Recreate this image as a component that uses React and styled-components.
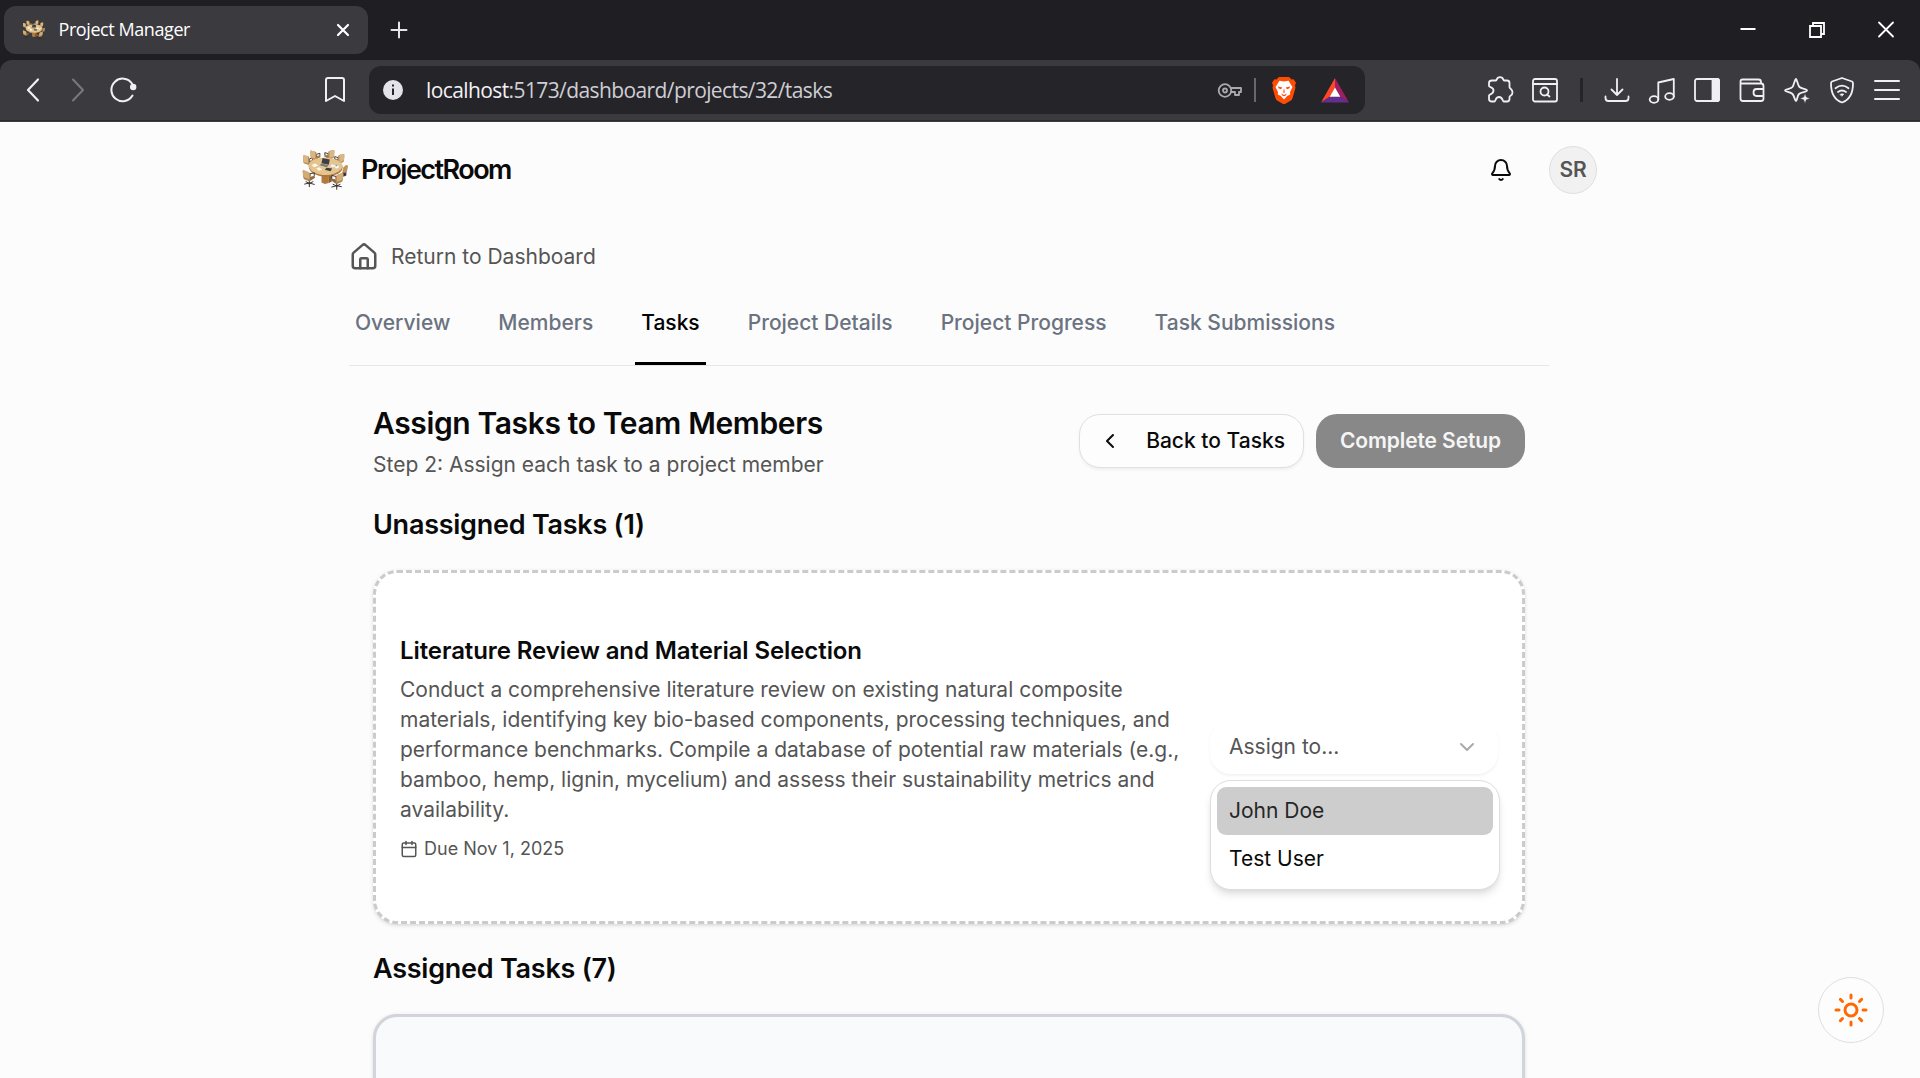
import React from "react";
import styled, { createGlobalStyle } from "styled-components";
import { Bell, Calendar, ChevronDown, ChevronLeft, Sun } from "lucide-react";

const GlobalStyle = createGlobalStyle`
  * { box-sizing: border-box; }
  body { margin: 0; background: #fcfcfc; overflow: hidden; }
  h1, h2, h3, p { margin: 0; }
  button { font: inherit; }
`;

const Screen = styled.div`
  width: 1920px;
  height: 1078px;
  overflow: hidden;
  background: #fcfcfc;
  font-family: Inter, "Liberation Sans", sans-serif;
  font-size: 21px;
  color: #0a0a0a;
`;

/* ---------- browser frame ---------- */

const Browser = styled.div`
  background: #1f1e23;
  font-family: "Open Sans", "Noto Sans", sans-serif;
`;

const TabStrip = styled.div`
  height: 60px;
  display: flex;
  align-items: center;
  padding-left: 4px;
`;

const BrowserTab = styled.div`
  width: 364px;
  height: 48px;
  border-radius: 12px;
  background: #3b3a3f;
  display: flex;
  align-items: center;
  padding: 0 17px 0 18px;
  color: #fff;
`;

const TabTitle = styled.span`
  flex: 1;
  margin-left: 12.5px;
  padding-bottom: 2px;
  font-size: 18px;
  line-height: 24px;
  letter-spacing: -0.42px;
`;

const NewTab = styled.div`
  display: flex;
  margin-left: 16px;
  flex: 1;
`;

const WindowControls = styled.div`
  display: flex;
  gap: 39px;
  padding-right: 19.5px;
`;

const Toolbar = styled.div`
  height: 62px;
  padding: 0 18px 2px;
  border-radius: 12px 12px 0 0;
  background: linear-gradient(#3b3a3f 60px, #2c2b30 60px, #2c2b30 61px, #3b3a3f 61px);
  display: flex;
  align-items: center;
`;

const IconRow = styled.div`
  display: flex;
  align-items: center;
  gap: 15px;
  margin-right: ${(p) => p.$after || 0}px;
  margin-left: ${(p) => (p.$end ? "auto" : 0)};
`;

const AddressBar = styled.div`
  width: 996px;
  height: 48px;
  border-radius: 12px;
  background: #252429;
  display: flex;
  align-items: center;
  padding: 0 16px 0 9px;
`;

const Url = styled.span`
  flex: 1;
  margin-left: 18px;
  font-size: 21px;
  line-height: 30px;
  letter-spacing: -0.6px;
  color: #cfced4;
  b { font-weight: 400; color: #f2f1f6; }
`;

const Divider = styled.span`
  width: ${(p) => p.$w}px;
  height: 24px;
  background: ${(p) => p.$color};
  margin: 0 ${(p) => p.$after}px 0 ${(p) => p.$before}px;
`;

const Shields = styled.div`
  display: flex;
  align-items: center;
  gap: 25px;
`;

const Glyph = styled.svg`
  display: block;
  flex: none;
  fill: none;
  stroke: ${(p) => p.$color || "#f0f0f4"};
  stroke-width: ${(p) => p.$stroke || 1.8};
  stroke-linecap: round;
  stroke-linejoin: round;
`;

function BarIcon({ children, size = 30, ...rest }) {
  return (
    <Glyph width={size} height={size} viewBox="0 0 30 30" {...rest}>
      {children}
    </Glyph>
  );
}

/* Back row chairs show their upright backs and a dark armrest. */
function BackChair({ x, y, flip = 1 }) {
  return (
    <g transform={`translate(${x} ${y}) scale(${flip} 1)`}>
      <path d="M14 20 28 15 32 20 18 28Z" fill="#a37b4a" />
      <path d="M19 19V12L29 9V15" stroke="#3a3530" strokeWidth="2.8" />
      <path d="M0 4Q0 0 4 1L15 4Q19 5 19 9V27Q19 31 15 30L4 26Q1 25 1 21Z" fill="#b88d57" />
      <path d="M0 4Q0 0 4 1L12 3Q15 4 15 8V25L4 22Q1 21 1 18Z" fill="#d9b683" />
    </g>
  );
}

/* Front row chairs are seen from behind, with a column and star base. */
function FrontChair({ x, y, flip = 1 }) {
  return (
    <g transform={`translate(${x} ${y}) scale(${flip} 1)`}>
      <path d="M20 30V42M6 42 20 39 35 43M10 35 20 40 31 35M20 41V50" stroke="#35302d" strokeWidth="3" />
      <path d="M16 22 35 17 38 22 24 32 13 29Z" fill="#8e6b42" />
      <path d="M22 18V11L35 8V16" stroke="#3a3530" strokeWidth="3" />
      <path d="M0 4Q0-1 5 1L19 7Q23 9 23 14V30Q23 34 18 33L6 28Q3 27 2 23Z" fill="#ad824f" />
      <path d="M0 4Q0-1 5 1L16 5Q20 7 20 12V28L7 23Q3 21 2 18Z" fill="#d3ac75" />
    </g>
  );
}

function RoomLogo({ width, height }) {
  return (
    <Glyph width={width} height={height} viewBox="18 18 142 124" $color="none">
      <BackChair x={21} y={36} />
      <BackChair x={43} y={22} />
      <BackChair x={116} y={20} flip={-1} />
      <BackChair x={146} y={32} flip={-1} />
      <path d="M150 67Q157 65 157 71L153 90Q151 95 145 95L139 92 143 74Z" fill="#bd925c" />
      <path d="M141 90h11v8l-9 4Z" fill="#3a3530" />
      <path d="M77 92h22v29l-12 3-10-5Z" fill="#b27a3e" />
      <path d="M99 92v29l9-5V94Z" fill="#8d5c2c" />
      <path d="M38 70Q40 55 64 49 89 43 114 50 139 57 141 74 140 89 117 97 95 105 69 99 39 91 38 70Z" fill="#a97840" />
      <path d="M38 67Q40 54 64 47 89 41 114 48 139 55 141 69 140 83 117 92 95 100 69 94 39 86 38 67Z" fill="#e6c48e" />
      <path d="M80 45 102 50 99 66 77 61Z" fill="#3c3f45" />
      <path d="m77 62 21 5-5 6-22-6Z" fill="#777b80" />
      <path d="m47 66 12-4 8 7-13 4Zm14 10 10-3 8 8-11 3Z" fill="#fbf8f1" />
      <path d="m108 64 12 3-7 7-10-4Zm8 7 11-4 4 6-10 5Z" fill="#eef6f8" />
      <path d="m92 75 17 2-5 8-17-4Z" fill="#3b3e43" />
      <circle cx="122" cy="68" r="2.500" fill="#49a6cb" />
      <FrontChair x={20} y={82} />
      <FrontChair x={143} y={90} flip={-1} />
    </Glyph>
  );
}

function BraveLion() {
  return (
    <Glyph width="24" height="28" viewBox="0 0 24 28" $color="none">
      <path d="M7 1h10l2.6 2.4 2-.2L24 6.8l-1 2.6.5 2.4-3 10.4q-.5 1.6-2 2.6L12 28.500 5.500 24.800q-1.500-1-2-2.600L.5 11.800 1 9.400 0 6.800l2.400-3.600 2 .2Z" fill="#ff4c05" />
      <path d="m12 5.500 4.500-.8 4 6.300-2.500 5 .2 2.500-3 1.500L12 23.500l-3.200-3.500-3-1.500.2-2.500L3.500 11l4-6.300Z" fill="#fff" />
      <path d="m6 10.500 4.300 1-1.300 1.700L6.500 12.300Zm12 0-4.300 1 1.300 1.700 2.500-.9ZM12 12l.8 4.200-.8.800-.8-.8ZM9 17.500l3 1.500 3-1.500-1.500 2.200-1.500.5-1.500-.5Z" fill="#ff4c05" />
    </Glyph>
  );
}

function BatTriangle() {
  return (
    <Glyph width="28" height="25" viewBox="0 0 28 25" $color="none">
      <path d="M14 0 0 24.500 9 18.500 14 9.500Z" fill="#ff4724" />
      <path d="M14 0 28 24.500 19 18.500 14 9.500Z" fill="#9e1f63" />
      <path d="M0 24.500H28L19 18.500H9Z" fill="#662d91" />
      <path d="M14 9.500 19.300 18.800H8.700Z" fill="#fff" />
    </Glyph>
  );
}

function BrowserChrome() {
  return (
    <Browser>
      <TabStrip>
        <BrowserTab>
          <RoomLogo width={24} height={20} />
          <TabTitle>Project Manager</TabTitle>
          <Glyph width="16" height="16" viewBox="0 0 16 16" $color="#fff" $stroke={2.2}>
            <path d="m3 3 10 10M13 3 3 13" />
          </Glyph>
        </BrowserTab>
        <NewTab>
          <BarIcon $color="#e6e5ea" $stroke={2}>
            <path d="M15 7.500v15M7.500 15h15" />
          </BarIcon>
        </NewTab>
        <WindowControls>
          <BarIcon $color="#fff" $stroke={2}><path strokeLinecap="butt" d="M7.500 14h15" /></BarIcon>
          <BarIcon $color="#fff" $stroke={1.8}>
            <path strokeLinejoin="miter" d="M8 11h11v11H8ZM11 11V8h11v11h-3" />
          </BarIcon>
          <BarIcon $color="#fff" $stroke={1.8}><path d="m8 7.500 14 14M22 7.500l-14 14" /></BarIcon>
        </WindowControls>
      </TabStrip>

      <Toolbar>
        <IconRow $after={182}>
          <BarIcon $stroke={2.2}><path d="M20 4.500 10 15l10 10.500" /></BarIcon>
          <BarIcon $stroke={2} $color="#79787e"><path d="M10 4.500 20 15 10 25.500" /></BarIcon>
          <BarIcon $stroke={2}>
            <path d="M24.500 20.500A11.300 11.300 0 1 1 24 8.500" />
            <circle cx="25.200" cy="12" r="3.200" fill="#f0f0f4" stroke="none" />
          </BarIcon>
        </IconRow>
        <IconRow $after={19}>
          <BarIcon $stroke={2}>
            <path d="M8 3h14q2 0 2 2v21l-9-5-9 5V5q0-2 2-2Z" />
          </BarIcon>
        </IconRow>
        <AddressBar>
          <BarIcon $color="none">
            <circle cx="15" cy="15" r="10" fill="#e4e3e9" />
            <path d="M14 13.500h2V20h-2ZM14 9.500h2v2h-2Z" fill="#252429" />
          </BarIcon>
          <Url><b>localhost</b>:5173/dashboard/projects/32/tasks</Url>
          <BarIcon $color="#aaa9ae" $stroke={1.8}>
            <circle cx="10" cy="15.500" r="6.300" />
            <circle cx="10" cy="15.500" r="2" />
            <path d="M15.800 13H26v4h-2v3h-4v-3h-4.200" />
          </BarIcon>
          <Divider $w={2} $color="#68676c" $before={9} $after={16} />
          <Shields>
            <BraveLion />
            <BatTriangle />
          </Shields>
        </AddressBar>
        <IconRow $end>
          <BarIcon>
            <path d="M7 5.500H11C12 5.500 11.200 2.200 15 2.200S18 5.500 19 5.500h3Q24.500 5.500 24.500 8v4C24.500 14 27.500 13.500 27.500 17.500 27.500 21 24.500 20.500 24.500 22v2q0 2.500-2.500 2.500H18.500C17.500 26.500 18 22 14 22S11 26.500 9.500 26.500H7Q4 26.500 4 24V20.500C4 19 8.500 19.500 8.500 15.500S4 12.500 4 11V8Q4 5.500 7 5.500Z" />
          </BarIcon>
          <BarIcon>
            <rect x="3" y="4" width="24" height="22.500" rx="2" />
            <path d="M3 9h24" />
            <circle cx="14.500" cy="16.500" r="4" />
            <path d="m17 19.500 2.500 2" />
          </BarIcon>
          <Divider $w={3} $color="#252429" $before={4.5} $after={4.5} />
          <BarIcon>
            <path d="M15 4v16M9.500 14.500 15 20l5.500-5.500M3.500 21.500V23q0 3 3 3h17q3 0 3-3v-1.500" />
          </BarIcon>
          <BarIcon>
            <ellipse cx="7" cy="24.500" rx="4.300" ry="3.300" />
            <ellipse cx="22.500" cy="21.500" rx="4.300" ry="3.300" />
            <path d="M11.300 24.500V7.500L26.800 4v17.500" />
          </BarIcon>
          <BarIcon>
            <rect x="3" y="4" width="24" height="22" rx="2" />
            <path d="M20.500 4H25q2 0 2 2v18q0 2-2 2h-4.500Z" fill="#f0f0f4" />
          </BarIcon>
          <BarIcon>
            <path d="M24 8.500V7q0-2.500-2.500-2.500h-16Q3.500 4.500 3.500 6.500v17q0 2.500 2.500 2.500h18q2.500 0 2.500-2.500V11Q26.500 8.500 24 8.500H4M26.500 14H19.500q-3 0-3 3.500t3 3.500h7" />
          </BarIcon>
          <BarIcon>
            <path d="M14 4C15 4 15.500 10 17.500 12S25 14 25 15.500 19 17 17 19 15.200 26 14 26 12.500 21 10.500 19 3 16.800 3 15.500 9 14 10.500 12 12.900 4 14 4Z" />
            <path d="m23 18.300 1.400 3.700 3.800 1.400-3.800 1.400L23 28.500l-1.400-3.700-3.800-1.400 3.800-1.400Z" fill="#f0f0f4" stroke="#3b3a3f" strokeWidth="0.600" />
          </BarIcon>
          <BarIcon>
            <path d="M15 3 25 6.500q1 .5 1 2C26 18 23.500 24.500 15 27.500 6.500 24.500 4 18 4 8.500q0-1.500 1-2Z" />
            <path d="M8.500 13.200q6.500-5 13 0M11 17q4-3 8 0" />
            <path d="M13.300 19.300q1.700-1 3.400 0L15 21Z" fill="#f0f0f4" strokeWidth="0.800" />
          </BarIcon>
          <BarIcon $stroke={2}>
            <path d="M3 6h24M3 15h24M3 24h24" />
          </BarIcon>
        </IconRow>
      </Toolbar>
    </Browser>
  );
}

/* ---------- application ---------- */

const Page = styled.main`
  width: 1898px;
  height: 956px;
  overflow: hidden;
`;

const Header = styled.header`
  width: 1296px;
  height: 96px;
  margin: 0 auto;
  display: flex;
  align-items: center;
  padding: 0 0 1px 1px;
`;

const Brand = styled.span`
  flex: 1;
  margin-left: 12px;
  font-size: 27px;
  line-height: 42px;
  font-weight: 600;
  letter-spacing: -1.54px;
`;

const Avatar = styled.div`
  width: 48px;
  height: 48px;
  margin-left: 36px;
  border-radius: 50%;
  border: 1px solid #dfdfdf;
  background: #f1f1f1;
  display: grid;
  place-items: center;
  font-weight: 600;
  letter-spacing: -0.2px;
  color: #555;
`;

const Content = styled.div`
  width: 1200px;
  margin: 0 auto;
`;

const ReturnLink = styled.div`
  margin-top: 24px;
  height: 30px;
  display: flex;
  align-items: center;
  gap: 12px;
  color: #555;
  line-height: 30px;
`;

const Tabs = styled.nav`
  height: 94px;
  display: flex;
  gap: 36px;
  border-bottom: 1px solid #e5e7eb;
`;

const Tab = styled.span`
  height: 93px;
  padding: 36px 6px 0;
  border-bottom: 3px solid ${(p) => (p.$active ? "#000" : "transparent")};
  color: ${(p) => (p.$active ? "#000" : "#6b7280")};
  font-weight: 500;
  line-height: 30px;
`;

const Panel = styled.section`
  padding: 36px 24px 0;
`;

const PanelHead = styled.div`
  display: flex;
  justify-content: space-between;
  align-items: center;
  height: 78px;
`;

const Title = styled.h1`
  font-size: 30px;
  line-height: 42px;
  font-weight: 600;
  letter-spacing: -0.37px;
  margin-bottom: 6px;
`;

const Muted = styled.p`
  line-height: 30px;
  color: #555;
`;

const Actions = styled.div`
  display: flex;
  gap: 12px;
`;

const Button = styled.button`
  height: 54px;
  width: ${(p) => (p.$primary ? 209 : 225)}px;
  padding: 0 ${(p) => (p.$primary ? 0 : 18)}px 1px;
  display: flex;
  align-items: center;
  justify-content: ${(p) => (p.$primary ? "center" : "space-between")};
  border-radius: 21px;
  border: ${(p) => (p.$primary ? "none" : "1px solid #e0e0e0")};
  background: ${(p) => (p.$primary ? "#888" : "#fdfdfd")};
  color: ${(p) => (p.$primary ? "#f5f5f5" : "#0a0a0a")};
  box-shadow: ${(p) => (p.$primary ? "none" : "0 1.5px 3px rgba(0,0,0,0.05)")};
  font-weight: ${(p) => (p.$primary ? 600 : 500)};
  letter-spacing: ${(p) => (p.$primary ? -0.1 : 0)}px;
`;

const SectionTitle = styled.h2`
  margin-top: ${(p) => p.$top}px;
  font-size: 27px;
  line-height: 42px;
  font-weight: 600;
  letter-spacing: -0.25px;
`;

const Card = styled.article`
  margin-top: 24px;
  height: 354px;
  padding: 0 24px;
  border: 3px ${(p) => (p.$assigned ? "solid #d1d5db" : "dashed #cbcbcb")};
  border-radius: 24px;
  background: ${(p) => (p.$assigned ? "#f9fafb" : "#fff")};
  box-shadow: 0 1.5px 4.5px rgba(0, 0, 0, 0.1), 0 1.5px 3px -1.5px rgba(0, 0, 0, 0.1);
  display: flex;
  align-items: center;
  justify-content: space-between;
`;

const TaskInfo = styled.div`
  width: 786px;
  h3 {
    font-size: 24px;
    line-height: 36px;
    font-weight: 600;
    letter-spacing: -0.09px;
    margin-bottom: 6px;
  }
`;

const Due = styled.div`
  display: flex;
  align-items: center;
  gap: 6px;
  margin-top: 12px;
  font-size: 18px;
  line-height: 24px;
  color: #555;
`;

const Assign = styled.div`
  position: relative;
  width: 288px;
`;

const Select = styled.div`
  height: 54px;
  padding: 0 18px 1px;
  border-radius: 21px;
  border: 1px solid transparent;
  background: #fff;
  box-shadow: 0 1.5px 3px rgba(0, 0, 0, 0.05);
  display: flex;
  align-items: center;
  justify-content: space-between;
  color: #555;
`;

const Menu = styled.div`
  position: absolute;
  top: 60px;
  left: 0;
  width: 290px;
  padding: 6px;
  height: 110px;
  border: 1px solid #dedede;
  border-radius: 21px;
  background: #fff;
  box-shadow: 0 6px 9px -1.5px rgba(0, 0, 0, 0.1), 0 3px 6px -3px rgba(0, 0, 0, 0.1);
`;

const Option = styled.div`
  height: 48px;
  padding: 0 12px;
  border-radius: 9px;
  line-height: 48px;
  color: ${(p) => (p.$active ? "#262626" : "#0a0a0a")};
  background: ${(p) => (p.$active ? "#cdcdcd" : "transparent")};
`;

const ThemeToggle = styled.button`
  position: fixed;
  right: 36px;
  bottom: 35px;
  width: 66px;
  height: 66px;
  padding: 0;
  border-radius: 50%;
  border: 1px solid #dedede;
  background: #fdfdfd;
  color: #ff6900;
  display: grid;
  place-items: center;
`;

const TABS = ["Overview", "Members", "Tasks", "Project Details", "Project Progress", "Task Submissions"];

export default function App() {
  return (
    <Screen>
      <GlobalStyle />
      <BrowserChrome />
      <Page>
        <Header>
          <RoomLogo width={47} height={41} />
          <Brand>ProjectRoom</Brand>
          <Bell size={24} />
          <Avatar>SR</Avatar>
        </Header>
        <Content>
          <ReturnLink>
            <Glyph width="30" height="30" viewBox="0 0 24 24" $color="#555" $stroke={2}>
              <path d="M15 21v-7a1 1 0 0 0-1-1h-4a1 1 0 0 0-1 1v7" />
              <path d="M3 10a2 2 0 0 1 .709-1.528l7-5.999a2 2 0 0 1 2.582 0l7 5.999A2 2 0 0 1 21 10v9a2 2 0 0 1-2 2H5a2 2 0 0 1-2-2z" />
            </Glyph>
            Return to Dashboard
          </ReturnLink>
          <Tabs>
            {TABS.map((name) => (
              <Tab key={name} $active={name === "Tasks"}>{name}</Tab>
            ))}
          </Tabs>
          <Panel>
            <PanelHead>
              <div>
                <Title>Assign Tasks to Team Members</Title>
                <Muted>Step 2: Assign each task to a project member</Muted>
              </div>
              <Actions>
                <Button><ChevronLeft size={24} />Back to Tasks</Button>
                <Button $primary>Complete Setup</Button>
              </Actions>
            </PanelHead>

            <SectionTitle $top={24}>Unassigned Tasks (1)</SectionTitle>
            <Card>
              <TaskInfo>
                <h3>Literature Review and Material Selection</h3>
                <Muted>
                  Conduct a comprehensive literature review on existing natural composite materials, identifying key
                  bio-based components, processing techniques, and performance benchmarks. Compile a database of
                  potential raw materials (e.g., bamboo, hemp, lignin, mycelium) and assess their sustainability
                  metrics and availability.
                </Muted>
                <Due><Calendar size={18} />Due Nov 1, 2025</Due>
              </TaskInfo>
              <Assign>
                <Select>
                  Assign to...
                  <ChevronDown size={24} color="#aaa" />
                </Select>
                <Menu>
                  <Option $active>John Doe</Option>
                  <Option>Test User</Option>
                </Menu>
              </Assign>
            </Card>

            <SectionTitle $top={24}>Assigned Tasks (7)</SectionTitle>
            <Card $assigned />
          </Panel>
        </Content>
      </Page>
      <ThemeToggle aria-label="Toggle theme"><Sun size={36} /></ThemeToggle>
    </Screen>
  );
}
